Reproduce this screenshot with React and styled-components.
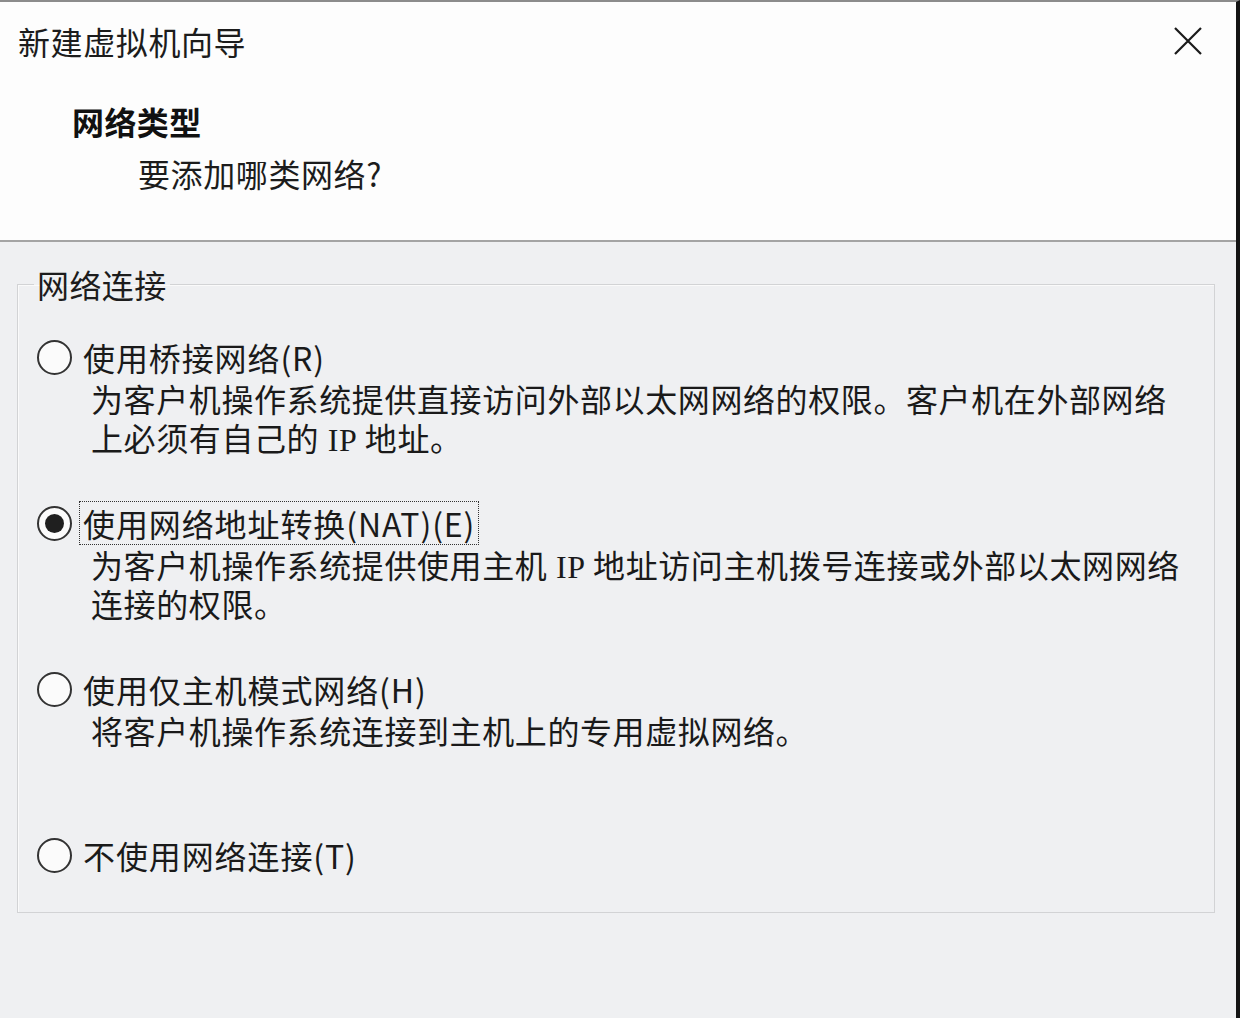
import React from "react";
import styled, { createGlobalStyle } from "styled-components";

const GlobalStyle = createGlobalStyle`
  html, body { margin: 0; padding: 0; background: #eff0f2; }
  body { font-family: "Noto Sans CJK SC", "Noto Sans", sans-serif; color: #1a1a1a; }
  * { box-sizing: border-box; }
`;

const Window = styled.div`
  width: 1240px;
  height: 1018px;
  border-top: 2px solid #8c8c8c;
  border-right: 4px solid #141414;
  background: #eff0f2;
  display: flex;
  flex-direction: column;
  overflow: hidden;
`;

const Header = styled.header`
  height: 240px;
  flex: none;
  background: #fdfdfd;
  border-bottom: 2px solid #a4a4a4;
  display: flex;
  flex-direction: column;
`;

const TitleBar = styled.div`
  display: flex;
  align-items: center;
  justify-content: space-between;
  padding: 19px 33px 0 18px;
`;

const Title = styled.div`
  font-size: 32px;
  line-height: 40px;
  letter-spacing: 0.6px;
  color: #1c1c1c;
`;

const CloseButton = styled.button`
  width: 30px;
  height: 30px;
  padding: 0;
  border: 0;
  background: transparent;
  display: flex;
  align-items: center;
  justify-content: center;
  cursor: pointer;
`;

const Heading = styled.div`
  font-size: 32px;
  line-height: 40px;
  font-weight: 700;
  padding-left: 72px;
  margin-top: 40px;
  letter-spacing: 0.4px;
  color: #111;
`;

const SubHeading = styled.div`
  font-size: 32px;
  line-height: 40px;
  padding-left: 138px;
  margin-top: 12px;
  letter-spacing: 0.6px;
  color: #1c1c1c;
`;

const Content = styled.main`
  padding: 22px 21px 0 17px;
`;

const GroupBox = styled.fieldset`
  margin: 0;
  border: 1px solid #d2d3d5;
  box-shadow: inset 1px 1px 0 #fafafa;
  padding: 31px 19px 35px 19px;
  min-width: 0;
`;

const Legend = styled.legend`
  font-size: 32px;
  line-height: 40px;
  padding: 0 3px;
  margin-left: -3px;
  letter-spacing: 0.4px;
  color: #1c1c1c;
`;

const OptionList = styled.div`
  display: flex;
  flex-direction: column;
  gap: 41px;
`;

const Option = styled.div`
  display: flex;
  flex-direction: column;
`;

const Row = styled.label`
  display: flex;
  align-items: center;
  height: 44px;
  gap: 7px;
  cursor: default;
`;

const RadioCircle = styled.span`
  width: 35px;
  height: 35px;
  flex: none;
  border-radius: 50%;
  border: 2px solid #333;
  background: #fbfbfb;
  display: flex;
  align-items: center;
  justify-content: center;
  &::after {
    content: "";
    width: 19px;
    height: 19px;
    border-radius: 50%;
    background: ${(p) => (p.$checked ? "#1f1f1f" : "transparent")};
  }
`;

const LabelText = styled.span`
  font-size: 32px;
  line-height: 40px;
  padding: 1px 3px;
  letter-spacing: 0.9px;
  border: 1px dotted ${(p) => (p.$focused ? "#333" : "transparent")};
  color: #1a1a1a;
  white-space: nowrap;
`;

const Description = styled.div`
  margin: 3px 0 0 54px;
  min-height: 78px;
  font-family: "Liberation Serif", "Noto Sans CJK SC", serif;
  font-size: 32px;
  line-height: 39px;
  letter-spacing: 0.6px;
  color: #1a1a1a;
`;

const DescLine = styled.div`
  white-space: nowrap;
  font-family: inherit;
`;

const options = [
  {
    label: "使用桥接网络(R)",
    desc: [
      "为客户机操作系统提供直接访问外部以太网网络的权限。客户机在外部网络",
      "上必须有自己的 IP 地址。",
    ],
  },
  {
    label: "使用网络地址转换(NAT)(E)",
    checked: true,
    desc: [
      "为客户机操作系统提供使用主机 IP 地址访问主机拨号连接或外部以太网网络",
      "连接的权限。",
    ],
  },
  {
    label: "使用仅主机模式网络(H)",
    desc: ["将客户机操作系统连接到主机上的专用虚拟网络。"],
  },
  { label: "不使用网络连接(T)" },
];

export default function App() {
  return (
    <>
      <GlobalStyle />
      <Window>
        <Header>
          <TitleBar>
            <Title>新建虚拟机向导</Title>
            <CloseButton aria-label="关闭">
              <svg width="28" height="28" viewBox="0 0 28 28">
                <path d="M1 1 L27 27 M27 1 L1 27" stroke="#1a1a1a" strokeWidth="2.2" fill="none" />
              </svg>
            </CloseButton>
          </TitleBar>
          <Heading>网络类型</Heading>
          <SubHeading>要添加哪类网络?</SubHeading>
        </Header>
        <Content>
          <GroupBox>
            <Legend>网络连接</Legend>
            <OptionList>
              {options.map((o) => (
                <Option key={o.label}>
                  <Row>
                    <RadioCircle $checked={o.checked} />
                    <LabelText $focused={o.checked}>{o.label}</LabelText>
                  </Row>
                  {o.desc && (
                    <Description>
                      {o.desc.map((l) => (
                        <DescLine key={l}>{l}</DescLine>
                      ))}
                    </Description>
                  )}
                </Option>
              ))}
            </OptionList>
          </GroupBox>
        </Content>
      </Window>
    </>
  );
}
